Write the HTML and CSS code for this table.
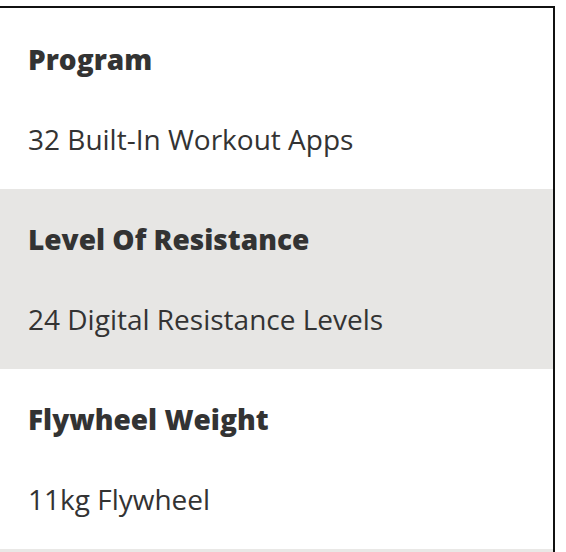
FILE: index.html
```html
<!DOCTYPE html>
<html>
<head>
<meta charset="utf-8">
<link rel="stylesheet" href="styles.css">
</head>
<body>
<div class="spec">
  <div class="row first">
    <div class="title">Program</div>
    <div class="value">32 Built-In Workout Apps</div>
  </div>
  <div class="row alt">
    <div class="title">Level Of Resistance</div>
    <div class="value">24 Digital Resistance Levels</div>
  </div>
  <div class="row">
    <div class="title">Flywheel Weight</div>
    <div class="value">11kg Flywheel</div>
  </div>
  <div class="next"></div>
</div>
</body>
</html>
```
FILE: styles.css
```css
html, body {
  margin: 0;
  padding: 0;
  background: #fff;
}
body {
  font-family: "Open Sans", "Liberation Sans", sans-serif;
  color: #333;
  overflow: hidden;
}
.spec {
  margin-top: 6px;
  width: 553px;
  border-top: 2px solid #111;
  border-right: 2px solid #111;
}
.row {
  display: flex;
  flex-direction: column;
  gap: 40px;
  padding: 30px 28px;
  font-size: 28px;
  line-height: 40px;
}
.row.first {
  padding-top: 31px;
}
.row.alt {
  background: #e7e6e4;
}
.title {
  font-weight: 800;
}
.value {
  font-weight: 400;
}
.next {
  height: 6px;
  background: #e9e8e6;
}
```
